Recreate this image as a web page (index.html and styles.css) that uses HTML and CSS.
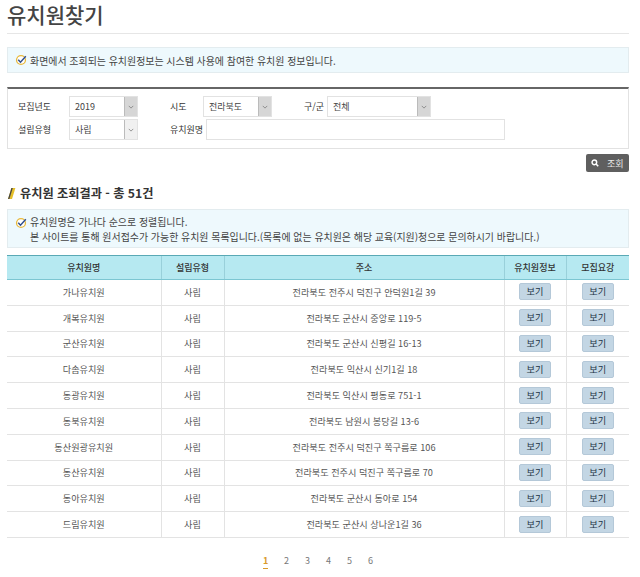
FILE: index.html
```html
<!DOCTYPE html>
<html lang="ko">
<head>
  <meta charset="UTF-8">
  <title>유치원찾기</title>
  <link rel="stylesheet" href="styles.css">
</head>
<body>
  <h1 class="page-title">유치원찾기</h1>

  <div class="notice notice-top">
    <svg class="check" viewBox="0 0 14 14"><circle cx="7" cy="7" r="5.2" fill="#fff" stroke="#e8b93c" stroke-width="1.5"/><path d="M3.8 6.6 6.4 9.6 12.6 2.6" fill="none" stroke="#2f4f8f" stroke-width="1.7"/></svg>
    <p>화면에서 조회되는 유치원정보는 시스템 사용에 참여한 유치원 정보입니다.</p>
  </div>

  <div class="search-box">
    <div class="search-row">
      <label class="lbl lbl-year">모집년도</label>
      <div class="select sel-year"><span>2019</span><i class="arrow arrow-grey"><svg viewBox="0 0 8 5"><path d="M1 1 4 4 7 1" fill="none" stroke="#777"/></svg></i></div>
      <label class="lbl lbl-sido">시도</label>
      <div class="select sel-sido"><span>전라북도</span><i class="arrow arrow-grey"><svg viewBox="0 0 8 5"><path d="M1 1 4 4 7 1" fill="none" stroke="#777"/></svg></i></div>
      <label class="lbl lbl-gu">구/군</label>
      <div class="select sel-gu"><span>전체</span><i class="arrow arrow-grey"><svg viewBox="0 0 8 5"><path d="M1 1 4 4 7 1" fill="none" stroke="#777"/></svg></i></div>
    </div>
    <div class="search-row">
      <label class="lbl lbl-year">설립유형</label>
      <div class="select sel-year"><span>사립</span><i class="arrow"><svg viewBox="0 0 8 5"><path d="M1 1 4 4 7 1" fill="none" stroke="#777"/></svg></i></div>
      <label class="lbl lbl-name">유치원명</label>
      <div class="text-input"></div>
    </div>
  </div>

  <div class="btn-row">
    <button class="btn-search">
      <svg viewBox="0 0 10 10"><circle cx="4.2" cy="4.2" r="2.9" fill="none" stroke="#fff" stroke-width="1.8"/><path d="M6.3 6.3 9 9" stroke="#fff" stroke-width="2"/></svg>
      <span>조회</span>
    </button>
  </div>

  <h2 class="result-title"><svg class="slash" viewBox="0 0 8 11"><path d="M3.4 0H7.4L4 11H0Z" fill="#e5bf2a"/><path d="M3.4 0 0 11H1.4L4.8 0Z" fill="#444"/></svg>유치원 조회결과 - 총 51건</h2>

  <div class="notice notice-result">
    <svg class="check" viewBox="0 0 14 14"><circle cx="7" cy="7" r="5.2" fill="#fff" stroke="#e8b93c" stroke-width="1.5"/><path d="M3.8 6.6 6.4 9.6 12.6 2.6" fill="none" stroke="#2f4f8f" stroke-width="1.7"/></svg>
    <p>유치원명은 가나다 순으로 정렬됩니다.<br>본 사이트를 통해 원서접수가 가능한 유치원 목록입니다.(목록에 없는 유치원은 해당 교육(지원)청으로 문의하시기 바랍니다.)</p>
  </div>

  <table class="result-table">
    <colgroup>
      <col class="c-name"><col class="c-type"><col class="c-addr"><col class="c-info"><col class="c-guide">
    </colgroup>
    <thead>
      <tr><th>유치원명</th><th>설립유형</th><th>주소</th><th>유치원정보</th><th>모집요강</th></tr>
    </thead>
    <tbody>
      <tr><td>가나유치원</td><td>사립</td><td>전라북도 전주시 덕진구 안덕원1길 39</td><td><a class="view">보기</a></td><td><a class="view">보기</a></td></tr>
      <tr><td>개복유치원</td><td>사립</td><td>전라북도 군산시 중앙로 119-5</td><td><a class="view">보기</a></td><td><a class="view">보기</a></td></tr>
      <tr><td>군산유치원</td><td>사립</td><td>전라북도 군산시 신평길 16-13</td><td><a class="view">보기</a></td><td><a class="view">보기</a></td></tr>
      <tr><td>다솜유치원</td><td>사립</td><td>전라북도 익산시 신기1길 18</td><td><a class="view">보기</a></td><td><a class="view">보기</a></td></tr>
      <tr><td>동광유치원</td><td>사립</td><td>전라북도 익산시 평동로 751-1</td><td><a class="view">보기</a></td><td><a class="view">보기</a></td></tr>
      <tr><td>동북유치원</td><td>사립</td><td>전라북도 남원시 봉당길 13-6</td><td><a class="view">보기</a></td><td><a class="view">보기</a></td></tr>
      <tr><td>동산원광유치원</td><td>사립</td><td>전라북도 전주시 덕진구 쪽구름로 106</td><td><a class="view">보기</a></td><td><a class="view">보기</a></td></tr>
      <tr><td>동산유치원</td><td>사립</td><td>전라북도 전주시 덕진구 쪽구름로 70</td><td><a class="view">보기</a></td><td><a class="view">보기</a></td></tr>
      <tr><td>동아유치원</td><td>사립</td><td>전라북도 군산시 동아로 154</td><td><a class="view">보기</a></td><td><a class="view">보기</a></td></tr>
      <tr><td>드림유치원</td><td>사립</td><td>전라북도 군산시 상나운1길 36</td><td><a class="view">보기</a></td><td><a class="view">보기</a></td></tr>
    </tbody>
  </table>

  <div class="paging">
    <a class="on">1</a><a>2</a><a>3</a><a>4</a><a>5</a><a>6</a>
  </div>
</body>
</html>
```

FILE: styles.css
```css
body {
  font-family: "Noto Sans CJK KR", "Liberation Sans", sans-serif;
  font-size: 9px;
  color: #444;
  background: #fff;
  margin: 0;
  padding: 0 11px 0 7px;
  height: 577px;
  overflow: hidden;
  box-sizing: border-box;
}

.page-title {
  margin: 0;
  height: 33px;
  line-height: 29px;
  font-size: 21px;
  font-weight: 500;
  color: #444;
  border-bottom: 1px solid #e6e6e6;
}

.notice {
  display: flex;
  align-items: center;
  background: #eef9fd;
  border: 1px solid #e3ecef;
  padding-left: 7px;
  box-sizing: border-box;
}

.notice p {
  margin: 0 0 0 3px;
  font-size: 9.95px;
  line-height: 15px;
  color: #444;
}

.notice-top {
  margin-top: 13px;
  height: 26px;
}

.notice-result {
  margin-top: 7px;
  height: 39px;
}

.notice-result .check {
  align-self: flex-start;
  margin-top: 7px;
}

.check {
  width: 12px;
  height: 12px;
  flex: none;
}

.search-box {
  margin-top: 14px;
  height: 62px;
  border: 1px solid #e2e2e2;
  border-top: 2px solid #666;
  box-sizing: border-box;
  padding-top: 7px;
}

.search-row {
  display: flex;
  align-items: center;
  height: 21px;
  margin-bottom: 2px;
}

.lbl {
  color: #333;
  flex: none;
}

.lbl-year { width: 51px; padding-left: 10px; }
.lbl-sido { width: 33px; margin-left: 32px; }
.lbl-gu { width: 23px; margin-left: 32px; }
.lbl-name { width: 36px; margin-left: 32px; }

.select {
  display: flex;
  justify-content: space-between;
  align-items: stretch;
  height: 21px;
  border: 1px solid #e2e2e2;
  box-sizing: border-box;
  flex: none;
}

.select span {
  line-height: 19px;
  padding-left: 5px;
}

.sel-year { width: 69px; }
.sel-sido { width: 69px; }
.sel-gu { width: 104px; }

.arrow {
  width: 12px;
  background: #f0f0f0;
  border-left: 1px solid #bbb;
  display: flex;
  align-items: center;
  justify-content: center;
}

.arrow-grey {
  background: #d6d6d6;
}

.arrow svg {
  width: 6px;
  height: 4px;
}

.text-input {
  width: 299px;
  height: 21px;
  border: 1px solid #e2e2e2;
  box-sizing: border-box;
}

.btn-row {
  display: flex;
  justify-content: flex-end;
  margin-top: 5px;
}

.btn-search {
  display: flex;
  align-items: center;
  width: 43px;
  height: 18px;
  padding: 0 0 0 5px;
  border: none;
  border-radius: 2px;
  background: #5f5f5f;
  color: #e8e8e8;
  font: inherit;
}

.btn-search svg {
  width: 8px;
  height: 8px;
  margin-right: 8px;
}

.result-title {
  display: flex;
  align-items: center;
  margin: 12px 0 0;
  height: 18px;
  font-size: 12.2px;
  font-weight: 700;
  color: #333;
}

.slash {
  width: 8px;
  height: 11px;
  margin: 0 4px 0 1px;
  flex: none;
}

.result-table {
  width: 622px;
  margin-top: 7px;
  border-collapse: collapse;
  table-layout: fixed;
}

.c-name { width: 154px; }
.c-type { width: 63px; }
.c-addr { width: 280px; }
.c-info { width: 62px; }
.c-guide { width: 63px; }

.result-table th {
  height: 24px;
  padding: 0;
  background: #b6e9f1;
  border-top: 1px solid #5aa9b5;
  border-bottom: 1px solid #7cc6d2;
  border-left: 1px solid #99d0da;
  font-weight: 500;
  color: #333;
  box-sizing: border-box;
}

.result-table th:first-child,
.result-table td:first-child {
  border-left: none;
}

.result-table td {
  height: 25.8px;
  padding: 0 0 1px;
  font-size: 9.15px;
  text-align: center;
  border-bottom: 1px solid #e3e3e3;
  border-left: 1px solid #e3e3e3;
  color: #555;
  box-sizing: border-box;
}

.view {
  display: inline-block;
  width: 32px;
  height: 17px;
  line-height: 15px;
  background: #c3d6e4;
  border: 1px solid #b4c8d8;
  border-radius: 2px;
  box-sizing: border-box;
  color: #234;
  vertical-align: middle;
}

.paging {
  display: flex;
  justify-content: center;
  gap: 16px;
  margin-top: 16px;
  line-height: 14px;
  color: #777;
}

.paging a {
  width: 5px;
  text-align: center;
}

.paging .on {
  color: #d99a2b;
  font-weight: 700;
  border-bottom: 1px solid #d99a2b;
}
```
